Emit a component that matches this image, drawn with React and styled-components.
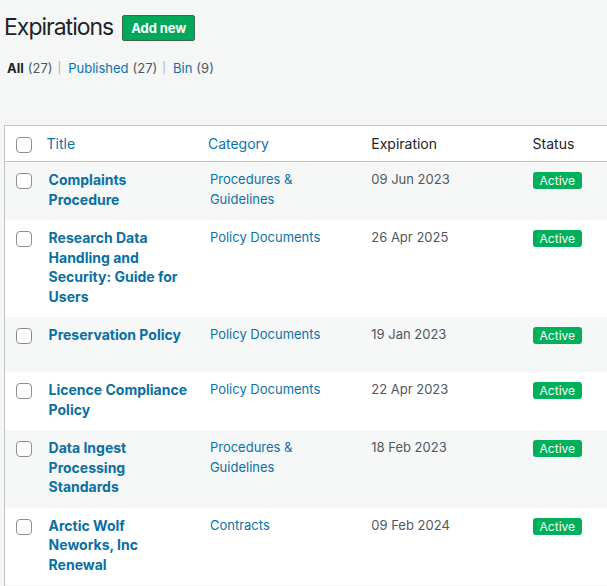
import React from "react";
import styled, { createGlobalStyle } from "styled-components";

const Global = createGlobalStyle`
  html, body { margin: 0; padding: 0; background: #f5f6f6; overflow: hidden; }
  body { font-family: Inter, "Noto Sans", "Liberation Sans", sans-serif; color: #1d2327; }
  * { box-sizing: border-box; }
`;

const Page = styled.div`
  padding: 14px 0 0 4px;
  width: 700px;
`;

const TitleBar = styled.div`
  display: flex;
  align-items: center;
  gap: 9px;
  height: 27px;
`;

const Heading = styled.h1`
  margin: 0;
  font-size: 23px;
  font-weight: 400;
  line-height: 27px;
  color: #1d2327;
  letter-spacing: -1px;
`;

const AddButton = styled.button`
  height: 26px;
  padding: 0 8px;
  background: #00a85a;
  border: 1px solid #3f6a52;
  border-radius: 2px;
  color: #fff;
  font-family: inherit;
  font-size: 13px;
  font-weight: 700;
  letter-spacing: -0.1px;
  cursor: pointer;
`;

const Filters = styled.ul`
  display: flex;
  list-style: none;
  margin: 18px 0 0 3px;
  padding: 0;
  font-size: 13px;
  line-height: 19px;
  color: #50575e;
`;

const FilterItem = styled.li`
  display: flex;
  align-items: center;
  gap: 4px;
  & + &::before {
    content: "|";
    color: #a7aaad;
    font-size: 11px;
    margin: 0 3px 0 5px;
  }
`;

const FilterLabel = styled.span`
  color: ${(p) => (p.$current ? "#1d2327" : "#0a73aa")};
  font-weight: ${(p) => (p.$current ? 700 : 400)};
`;

const Table = styled.table`
  margin-top: 47px;
  border-collapse: collapse;
  table-layout: fixed;
  width: 680px;
  background: #fff;
  border: 1px solid #c3c4c7;
  border-right: none;
`;

const HeadRow = styled.tr`
  border-bottom: 1px solid #c3c4c7;
`;

const Th = styled.th`
  text-align: left;
  font-weight: 400;
  font-size: 14px;
  line-height: 19px;
  padding: 8px ${(p) => (p.$sortable ? "8px" : "10px")};
  color: ${(p) => (p.$sortable ? "#0a73aa" : "#1d2327")};
  vertical-align: top;
`;

const CheckTh = styled.th`
  padding: 11px 0 0 11px;
  vertical-align: top;
  text-align: left;
`;

const Row = styled.tr`
  height: 55px;
  background: ${(p) => (p.$striped ? "#f6f7f7" : "#fff")};
`;

const CheckTd = styled.td`
  padding: 11px 0 0 11px;
  vertical-align: top;
`;

const Checkbox = styled.span`
  display: block;
  width: 16px;
  height: 16px;
  border: 1px solid #8c8f94;
  border-radius: 4px;
  background: #fff;
`;

const Td = styled.td`
  padding: 8px 10px;
  vertical-align: top;
  font-size: 13px;
  line-height: 19.5px;
  color: #50575e;
`;

const TitleLink = styled.a`
  display: block;
  font-size: 14px;
  font-weight: 700;
  line-height: 19.5px;
  color: #0a6fa3;
  text-decoration: none;
`;

const RowActions = styled.div`
  height: 3px;
`;

const CatLink = styled.a`
  color: #0a73aa;
  text-decoration: none;
`;

const Badge = styled.span`
  display: inline-block;
  margin-top: 2px;
  height: 17px;
  padding: 0 7px;
  background: #00b05a;
  border-radius: 3px;
  color: #fff;
  font-size: 12px;
  font-weight: 400;
  line-height: 17px;
`;

const rows = [
  { title: "Complaints Procedure", cat: "Procedures & Guidelines", date: "09 Jun 2023" },
  { title: "Research Data Handling and Security: Guide for Users", cat: "Policy Documents", date: "26 Apr 2025" },
  { title: "Preservation Policy", cat: "Policy Documents", date: "19 Jan 2023" },
  { title: "Licence Compliance Policy", cat: "Policy Documents", date: "22 Apr 2023" },
  { title: "Data Ingest Processing Standards", cat: "Procedures & Guidelines", date: "18 Feb 2023" },
  { title: "Arctic Wolf Neworks, Inc Renewal", cat: "Contracts", date: "09 Feb 2024" },
  { title: "", cat: "", date: "" },
];

export default function App() {
  return (
    <Page>
      <Global />
      <TitleBar>
        <Heading>Expirations</Heading>
        <AddButton>Add new</AddButton>
      </TitleBar>
      <Filters>
        <FilterItem>
          <FilterLabel $current>All</FilterLabel>
          <span>(27)</span>
        </FilterItem>
        <FilterItem>
          <FilterLabel>Published</FilterLabel>
          <span>(27)</span>
        </FilterItem>
        <FilterItem>
          <FilterLabel>Bin</FilterLabel>
          <span>(9)</span>
        </FilterItem>
      </Filters>
      <Table>
        <colgroup>
          <col style={{ width: 34 }} />
          <col style={{ width: 161 }} />
          <col style={{ width: 161 }} />
          <col style={{ width: 161 }} />
          <col style={{ width: 161 }} />
        </colgroup>
        <thead>
          <HeadRow>
            <CheckTh>
              <Checkbox />
            </CheckTh>
            <Th $sortable>Title</Th>
            <Th $sortable>Category</Th>
            <Th>Expiration</Th>
            <Th>Status</Th>
          </HeadRow>
        </thead>
        <tbody>
          {rows.map((r, i) => (
            <Row key={i} $striped={i % 2 === 0}>
              <CheckTd>{r.title && <Checkbox />}</CheckTd>
              <Td>
                {r.title && (
                  <>
                    <TitleLink href="#">{r.title}</TitleLink>
                    <RowActions />
                  </>
                )}
              </Td>
              <Td>{r.cat && <CatLink href="#">{r.cat}</CatLink>}</Td>
              <Td>{r.date}</Td>
              <Td>{r.title && <Badge>Active</Badge>}</Td>
            </Row>
          ))}
        </tbody>
      </Table>
    </Page>
  );
}
